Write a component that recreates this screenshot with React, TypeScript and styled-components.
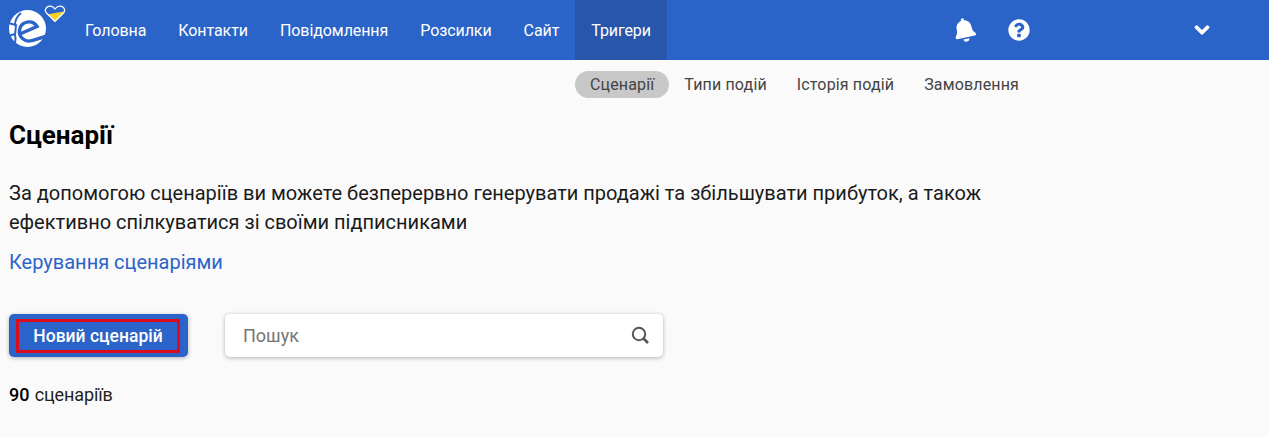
import { createGlobalStyle, styled } from 'styled-components';
import { FaBell, FaChevronDown, FaQuestionCircle } from 'react-icons/fa';

const GlobalStyle = createGlobalStyle`
  html, body {
    margin: 0;
    padding: 0;
    background: #fafafa;
    font-family: Roboto, "Liberation Sans", sans-serif;
    overflow: hidden;
  }
`;

const NAV_ITEMS = ['Головна', 'Контакти', 'Повідомлення', 'Розсилки', 'Сайт', 'Тригери'];
const SUB_ITEMS = ['Сценарії', 'Типи подій', 'Історія подій', 'Замовлення'];

const HEART = 'M55 21.5 L46.5 13 C43.5 9.5 47 5.8 50.5 6.2 C52.5 6.4 54 7.5 55 9 C56 7.5 57.5 6.4 59.5 6.2 C63 5.8 66.5 9.5 63.5 13 Z';

const Logo = () => (
  <LogoBox>
    <svg width="69" height="60" viewBox="0 0 69 60" fill="none">
      <circle cx="27.5" cy="28.5" r="18.5" fill="#fff" />
      <path d="M21 33.5 L37 26.5 A9.5 9.5 0 0 0 19.5 30 A9.5 9.5 0 0 0 32 40.5 L47 36" stroke="#2b64c8" strokeWidth="3.4" />
      <path d="M7 22.5 L17 25.5 M7 36.5 L15 34 M16 25 L15 35 M21 13 Q15 18 15 25 M15 35 Q17 42 12 47" stroke="#2b64c8" strokeWidth="2" />
      <clipPath id="heart">
        <path d={HEART} />
      </clipPath>
      <g clipPath="url(#heart)">
        <rect x="44" y="4" width="22" height="20" fill="#f5cf2a" />
        <path d="M44 4 H66 V11 L44 15 Z" fill="#2b64c8" />
      </g>
      <path d={HEART} stroke="#fff" strokeWidth="1.2" />
    </svg>
  </LogoBox>
);

export default function App() {
  return (
    <>
      <GlobalStyle />
      <Header>
        <Logo />
        <Nav>
          {NAV_ITEMS.map((item) => (
            <NavItem key={item} $active={item === 'Тригери'}>
              {item}
            </NavItem>
          ))}
        </Nav>
        <Icons>
          <BellIcon />
          <HelpIcon />
        </Icons>
        <Chevron />
      </Header>
      <SubNav>
        {SUB_ITEMS.map((item) => (
          <SubItem key={item} $active={item === 'Сценарії'}>
            {item}
          </SubItem>
        ))}
      </SubNav>
      <Content>
        <Title>Сценарії</Title>
        <Description>
          За допомогою сценаріїв ви можете безперервно генерувати продажі та збільшувати прибуток, а також
          ефективно спілкуватися зі своїми підписниками
        </Description>
        <ManageLink href="#">Керування сценаріями</ManageLink>
        <Toolbar>
          <NewButton>
            <Marked>Новий сценарій</Marked>
          </NewButton>
          <SearchBox>
            <SearchText>Пошук</SearchText>
            <svg width="19" height="19" viewBox="0 0 19 19" fill="none" stroke="#555">
              <circle cx="8" cy="8" r="6.2" strokeWidth="2" />
              <path d="M12.5 12.5 L17 17" strokeWidth="2.6" />
            </svg>
          </SearchBox>
        </Toolbar>
        <Count>
          <strong>90</strong> сценаріїв
        </Count>
      </Content>
    </>
  );
}

const Header = styled.header`
  display: flex;
  align-items: stretch;
  height: 60px;
  background: #2b64c8;
`;

const LogoBox = styled.div`
  width: 69px;
  height: 60px;
  flex: none;
`;

const Nav = styled.nav`
  display: flex;
`;

const NavItem = styled.a<{ $active?: boolean }>`
  display: flex;
  align-items: center;
  padding: 0 16px;
  font-size: 16px;
  letter-spacing: -0.08px;
  color: #fff;
  background: ${(p) => (p.$active ? '#2856ab' : 'transparent')};
`;

const Icons = styled.div`
  display: flex;
  align-items: center;
  gap: 33px;
  margin-left: 287px;
  color: #fff;
`;

const BellIcon = styled(FaBell)`
  width: 21px;
  height: 24px;
  transform: rotate(-12deg);
`;

const HelpIcon = styled(FaQuestionCircle)`
  width: 22px;
  height: 22px;
`;

const Chevron = styled(FaChevronDown)`
  align-self: center;
  margin-left: 164px;
  width: 16px;
  height: 16px;
  color: #fff;
  stroke: #fff;
  stroke-width: 40;
`;

const SubNav = styled.div`
  display: flex;
  padding: 11px 0 0 575px;
`;

const SubItem = styled.a<{ $active?: boolean }>`
  height: 27px;
  line-height: 27px;
  padding: 0 15px;
  border-radius: 14px;
  font-size: 16px;
  letter-spacing: 0.15px;
  color: #444;
  background: ${(p) => (p.$active ? '#c8c8c8' : 'transparent')};
`;

const Content = styled.main`
  padding: 0 9px;
`;

const Title = styled.h1`
  margin: 21px 0 0;
  font-size: 26px;
  line-height: 32px;
  font-weight: 700;
  color: #000;
`;

const Description = styled.p`
  width: 990px;
  margin: 28px 0 0;
  font-size: 20px;
  line-height: 29px;
  color: #1a1a1a;
`;

const ManageLink = styled.a`
  display: block;
  margin-top: 11px;
  font-size: 20px;
  line-height: 28px;
  color: #2b64c8;
  text-decoration: none;
`;

const Toolbar = styled.div`
  display: flex;
  gap: 37px;
  margin-top: 38px;
`;

const NewButton = styled.button`
  width: 179px;
  height: 43px;
  padding: 4px 7px;
  border: 0;
  border-radius: 5px;
  background: #2b64c8;
  box-shadow: 0 1px 4px rgba(0, 0, 0, 0.3);
  font-family: inherit;
`;

const Marked = styled.span`
  display: flex;
  align-items: center;
  justify-content: center;
  box-sizing: border-box;
  width: 164px;
  height: 34px;
  border: 3px solid #e00a1e;
  color: #fff;
  font-size: 17.5px;
  font-weight: 500;
`;

const SearchBox = styled.div`
  display: flex;
  align-items: center;
  justify-content: space-between;
  box-sizing: border-box;
  width: 438px;
  height: 43px;
  padding: 0 13px 0 18px;
  border-radius: 5px;
  background: #fff;
  box-shadow: 0 1px 4px rgba(0, 0, 0, 0.3);
`;

const SearchText = styled.span`
  font-size: 18px;
  color: #757575;
`;

const Count = styled.div`
  margin-top: 27px;
  font-size: 18px;
  line-height: 22px;
  letter-spacing: -0.1px;
  word-spacing: 1px;
  color: #222;

  strong {
    font-weight: 500;
    color: #000;
  }
`;
